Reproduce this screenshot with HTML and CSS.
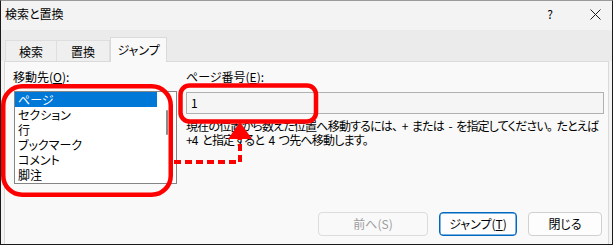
FILE: index.html
```html
<!DOCTYPE html>
<html lang="ja">
<head>
<meta charset="utf-8">
<title>検索と置換</title>
<link rel="stylesheet" href="styles.css">
</head>
<body>
<div class="dialog">
  <div class="titlebar">
    <span class="title">検索と置換</span>
    <span class="help">?</span>
    <span class="close"><svg width="11" height="11" viewBox="0 0 11 11"><path d="M0.5 0.5 L10.5 10.5 M10.5 0.5 L0.5 10.5" stroke="#1a1a1a" stroke-width="1" fill="none"/></svg></span>
  </div>
  <div class="tabstrip">
    <div class="tab t1">検索</div>
    <div class="tab t2">置換</div>
    <div class="tab t3 active">ジャンプ</div>
  </div>
  <div class="panel">
    <div class="fields">
      <div class="col-left">
        <div class="label">移動先(<u>O</u>):</div>
        <div class="listbox">
          <div class="items">
            <div class="item selected">ページ</div>
            <div class="item">セクション</div>
            <div class="item">行</div>
            <div class="item">ブックマーク</div>
            <div class="item">コメント</div>
            <div class="item">脚注</div>
          </div>
          <div class="scroll"><div class="thumb"></div></div>
        </div>
      </div>
      <div class="col-right">
        <div class="label">ページ番号(<u>E</u>):</div>
        <div class="input">1</div>
        <p class="desc">現在の位置から数えた位置へ移動するには、 + または - を指定してください。 たとえば<br>+4 と指定すると 4 つ先へ移動します。</p>
      </div>
    </div>
    <div class="buttons">
      <div class="btn disabled prev">前へ(S)</div>
      <div class="btn focused jump">ジャンプ(<u>T</u>)</div>
      <div class="btn closebtn">閉じる</div>
    </div>
  </div>
</div>
<svg class="annot" width="615" height="246" viewBox="0 0 615 246">
  <rect x="3.25" y="86.25" width="167.5" height="108.5" rx="19" ry="19" fill="none" stroke="#ff0000" stroke-width="4.5"/>
  <rect x="180.5" y="85.5" width="135.5" height="36" rx="9" ry="9" fill="none" stroke="#ff0000" stroke-width="4.5"/>
  <path d="M174 162 H240 V139" fill="none" stroke="#ff0000" stroke-width="4" stroke-dasharray="7 4"/>
  <polygon points="240,122 252,139 228,139" fill="#ff0000"/>
</svg>
</body>
</html>
```
FILE: styles.css
```css
body {
  margin: 0;
  background: #ffffff;
  font-family: "Noto Sans CJK JP", "Noto Sans", sans-serif;
  font-size: 12px;
  color: #000;
  font-feature-settings: "palt";
}

.dialog {
  width: 613px;
  height: 245px;
  box-sizing: border-box;
  border: 1px solid #1a1a1a;
  border-top-color: #9a9a9a;
  background: #f3f3f3;
  display: flex;
  flex-direction: column;
}

.titlebar {
  height: 29px;
  display: flex;
  align-items: flex-start;
  padding-top: 5px;
  box-sizing: border-box;
  padding-left: 4px;
  line-height: 16px;
}

.title {
  flex: 1;
}

.help {
  width: 16px;
  text-align: center;
  margin-right: 27px;
}

.close {
  width: 20px;
  display: flex;
  justify-content: center;
  padding-top: 3px;
  margin-right: 7px;
}

.tabstrip {
  height: 31px;
  background: #ebebeb;
  display: flex;
  align-items: flex-end;
  padding-left: 4px;
  box-sizing: border-box;
}

.tab {
  height: 21px;
  box-sizing: border-box;
  border: 1px solid #dedede;
  border-bottom: none;
  background: #efefef;
  display: flex;
  align-items: center;
  justify-content: center;
  line-height: 14px;
  padding-top: 1px;
}

.t1 { width: 52px; }
.t2 { width: 53px; border-left: none; }
.t3 { width: 57px; }

.tab.active {
  height: 25px;
  background: #f9f9f9;
  margin-bottom: -1px;
  position: relative;
  z-index: 1;
  border-color: #dadada;
  border-left: 1px solid #dadada;
  padding-bottom: 2px;
}

.panel {
  flex: 1;
  margin: 0 3px;
  border: 1px solid #dadada;
  border-bottom: none;
  background: #f9f9f9;
  padding: 7px 4px 0 9px;
  display: flex;
  flex-direction: column;
  min-width: 0;
}

.fields {
  display: flex;
  gap: 9px;
}

.label {
  line-height: 15px;
  height: 15px;
  white-space: nowrap;
}

.col-left .label {
  margin-bottom: 7px;
  margin-left: -1px;
}

.col-right .label {
  margin-bottom: 8px;
}

.col-left {
  width: 163px;
  flex: none;
}

.col-right {
  flex: 1;
  min-width: 0;
}

.listbox {
  width: 163px;
  height: 93px;
  box-sizing: border-box;
  border: 1px solid #858585;
  background: #ffffff;
  display: flex;
}

.items {
  width: 142px;
}

.item {
  height: 15px;
  line-height: 15px;
  padding-left: 3px;
  white-space: nowrap;
}

.item.selected {
  background: #0078d7;
  color: #ffffff;
}

.scroll {
  flex: 1;
  display: flex;
  justify-content: center;
  padding-top: 18px;
  padding-left: 1px;
}

.thumb {
  width: 2px;
  height: 25px;
  background: #8a8a8a;
  border-radius: 1px;
}

.input {
  height: 22px;
  box-sizing: border-box;
  border: 1px solid #b0b0b0;
  background: #f5f5f5;
  padding-left: 4px;
  line-height: 20px;
}

.desc {
  margin: 5px 0 0 0;
  line-height: 14px;
  white-space: nowrap;
  letter-spacing: -0.8px;
  word-spacing: 2.5px;
}

.buttons {
  margin-top: auto;
  margin-bottom: 8px;
  margin-right: 2px;
  display: flex;
  justify-content: flex-end;
  gap: 11px;
}

.btn {
  height: 24px;
  box-sizing: border-box;
  border: 1px solid #d0d0d0;
  border-radius: 4px;
  background: #fdfdfd;
  display: flex;
  align-items: center;
  justify-content: center;
  line-height: 14px;
}

.prev { width: 110px; }
.jump { width: 78px; }
.closebtn { width: 74px; }

.btn.disabled {
  color: #9d9d9d;
  border-color: #dcdcdc;
  background: #f9f9f9;
}

.btn.focused {
  border: 1px solid #0067c0;
  box-shadow: inset 0 0 0 0.5px #0067c0;
}

.annot {
  position: absolute;
  left: 0;
  top: 0;
  pointer-events: none;
}
```
